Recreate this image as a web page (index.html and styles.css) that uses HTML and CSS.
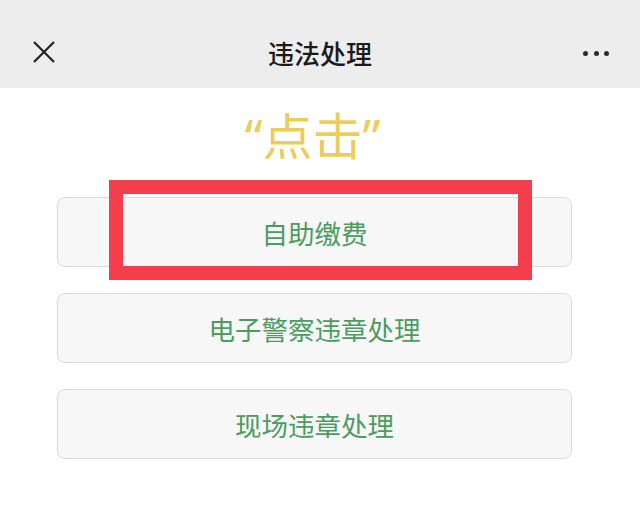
FILE: index.html
```html
<!DOCTYPE html>
<html lang="zh-CN">
<head>
<meta charset="utf-8">
<title>违法处理</title>
<link rel="stylesheet" href="styles.css">
</head>
<body>
<header class="topbar">
  <div class="side">
    <svg class="close" width="22" height="22" viewBox="0 0 22 22" aria-hidden="true">
      <path d="M1 1 L21 21 M21 1 L1 21" stroke="#222" stroke-width="2.2" fill="none"/>
    </svg>
  </div>
  <h1 class="title">违法处理</h1>
  <div class="side">
    <div class="dots"><span></span><span></span><span></span></div>
  </div>
</header>
<main class="content">
  <div class="hint">“点击”</div>
  <ul class="menu">
    <li class="item">自助缴费<span class="highlight"></span></li>
    <li class="item">电子警察违章处理</li>
    <li class="item">现场违章处理</li>
  </ul>
</main>
</body>
</html>
```

FILE: styles.css
```css
html, body {
  margin: 0;
  padding: 0;
  background: #ffffff;
  font-family: "Noto Sans CJK SC", "Noto Sans", sans-serif;
}

.topbar {
  height: 88px;
  box-sizing: border-box;
  padding-top: 16px;
  background: #ededed;
  display: grid;
  grid-template-columns: 88px 1fr 88px;
  align-items: center;
}

.side {
  display: flex;
  justify-content: center;
  align-items: center;
}

.close {
  display: block;
}

.title {
  margin: 0;
  text-align: center;
  font-size: 26px;
  font-weight: 500;
  color: #1b1b1b;
  line-height: 1;
  padding-top: 2px;
}

.dots {
  display: flex;
  gap: 5.5px;
  margin-top: 2px;
}

.dots span {
  width: 5px;
  height: 5px;
  border-radius: 50%;
  background: #2a2a2a;
}

.content {
  padding-top: 23px;
}

.hint {
  text-align: center;
  font-family: "Noto Sans", "Noto Sans CJK SC", sans-serif;
  font-size: 50px;
  line-height: 50px;
  color: #eccd5a;
  padding-right: 15px;
}

.menu {
  list-style: none;
  margin: 36px 68px 0 57px;
  padding: 0;
  display: flex;
  flex-direction: column;
  gap: 26px;
}

.item {
  position: relative;
  height: 70px;
  box-sizing: border-box;
  border: 1px solid #dadada;
  border-radius: 8px;
  background: #f7f7f7;
  display: flex;
  align-items: center;
  justify-content: center;
  font-size: 26.5px;
  color: #4c9c62;
}

.highlight {
  position: absolute;
  left: 51px;
  top: -18px;
  width: 423px;
  height: 100px;
  box-sizing: border-box;
  border: 14px solid #f43e4b;
}
```
